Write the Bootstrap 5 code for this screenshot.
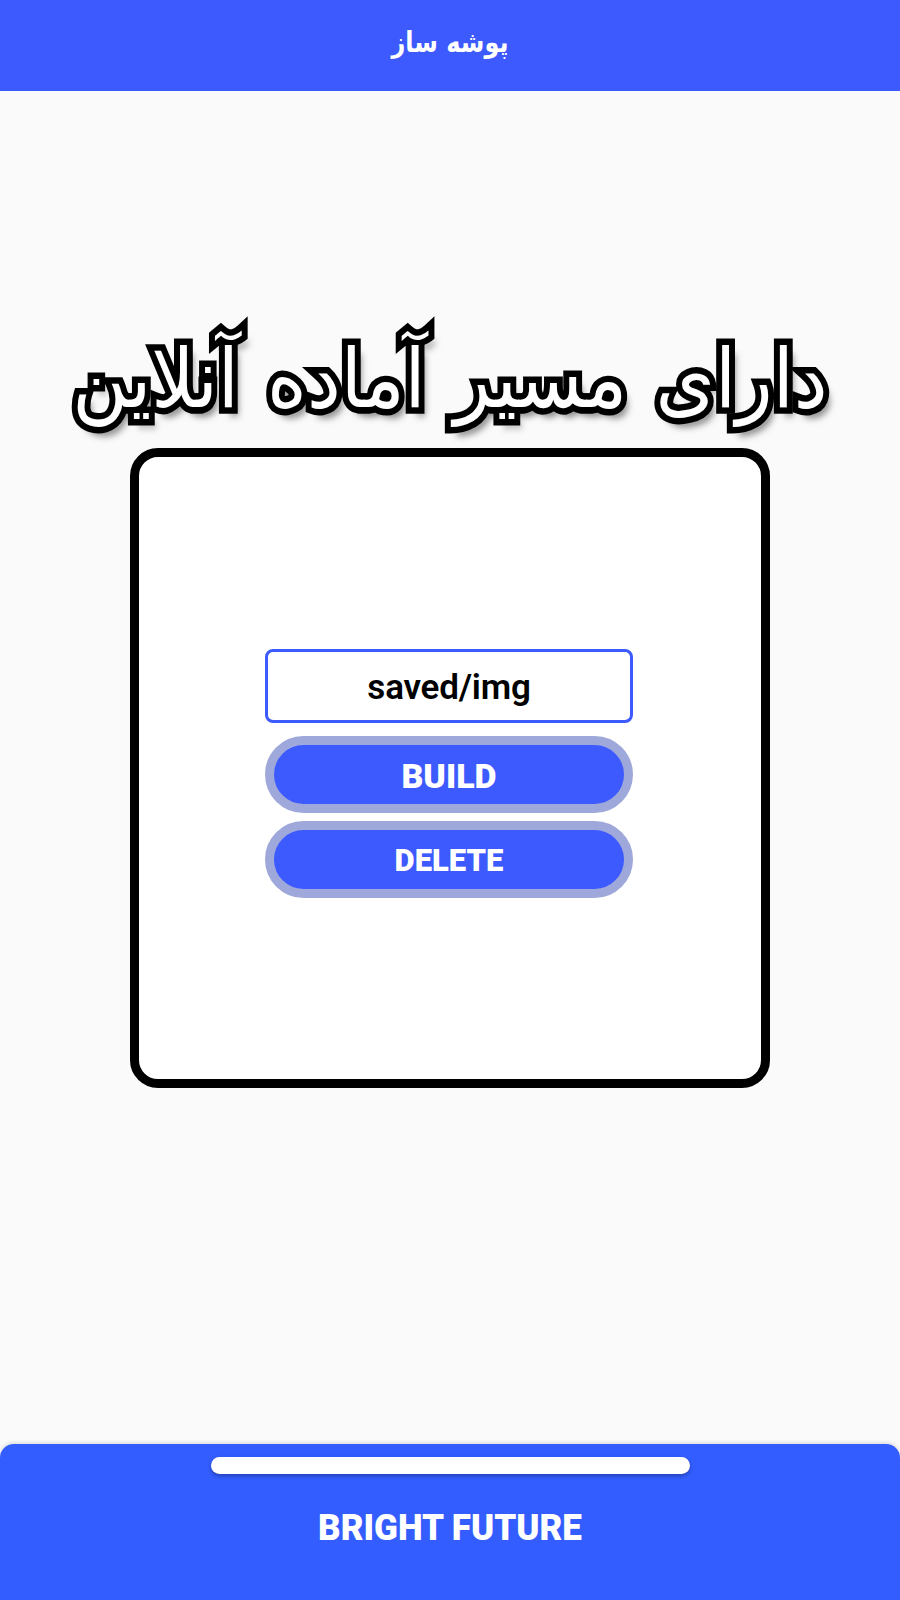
<!DOCTYPE html>
<html lang="fa">
<head>
<meta charset="utf-8">
<title>پوشه ساز</title>
<link href="https://cdn.jsdelivr.net/npm/bootstrap@5.3.0/dist/css/bootstrap.min.css" rel="stylesheet">
<style>
body{background:#fafafa;height:1600px;width:900px;overflow:hidden;font-family:Roboto,"DejaVu Sans",sans-serif}
.top-bar{height:91px;background:#3d5afe;color:#fff;font:700 24px "DejaVu Sans",sans-serif}
.top-title{transform:scaleY(1.2) translateY(-3px)}
.stage{height:1353px;padding-top:232px}
.banner{font:400 76px/125px "DejaVu Sans",sans-serif;word-spacing:4px;height:125px;color:#fff;-webkit-text-stroke:12px #000;paint-order:stroke fill;text-shadow:6px 9px 7px rgba(0,0,0,.5);white-space:nowrap;transform:scaleY(1.08) translateY(-7px)}
.frame{width:640px;height:640px;background:#fff;border:9px solid #000;border-radius:28px}
.stack{width:368px;margin:11px 2px 0 0}
.path-box{height:74px;border:3px solid #3d5afe;border-radius:8px;font-weight:600;font-size:35px;letter-spacing:-.2px;color:#000;background:#fff;padding-top:4px}
.pill{height:77px;background:#3d5afe;border:9px solid #9fa8da;border-radius:39px;color:#fff;font-weight:900;line-height:1;padding-top:2px!important}
.pill-a{font-size:34px;margin-top:13px}
.pill-b{font-size:31px;margin-top:8px}
.dock{height:156px;background:#335dff;border-radius:14px 14px 0 0;box-shadow:0 -1px 4px rgba(0,0,0,.15);color:#fff;padding-top:13px}
.grip{width:479px;height:17px;background:#fff;border-radius:9px;box-shadow:0 2px 4px rgba(0,0,0,.3)}
.brand{font:900 35px/1 Roboto,sans-serif;margin-top:36px;transform:scaleY(1.06)}
</style>
</head>
<body>
<header class="top-bar d-flex align-items-center justify-content-center" dir="rtl"><span class="top-title">پوشه ساز</span></header>
<main class="stage d-flex flex-column align-items-center">
  <h1 class="banner text-center m-0" dir="rtl">دارای مسیر آماده آنلاین</h1>
  <div class="frame d-flex align-items-center justify-content-center">
    <div class="stack d-flex flex-column">
      <div class="path-box d-flex align-items-center justify-content-center">saved/img</div>
      <button type="button" class="pill pill-a btn p-0 text-white">BUILD</button>
      <button type="button" class="pill pill-b btn p-0 text-white">DELETE</button>
    </div>
  </div>
</main>
<footer class="dock d-flex flex-column align-items-center">
  <div class="grip"></div>
  <div class="brand">BRIGHT FUTURE</div>
</footer>
<script src="https://cdn.jsdelivr.net/npm/bootstrap@5.3.0/dist/js/bootstrap.bundle.min.js"></script>
</body>
</html>
